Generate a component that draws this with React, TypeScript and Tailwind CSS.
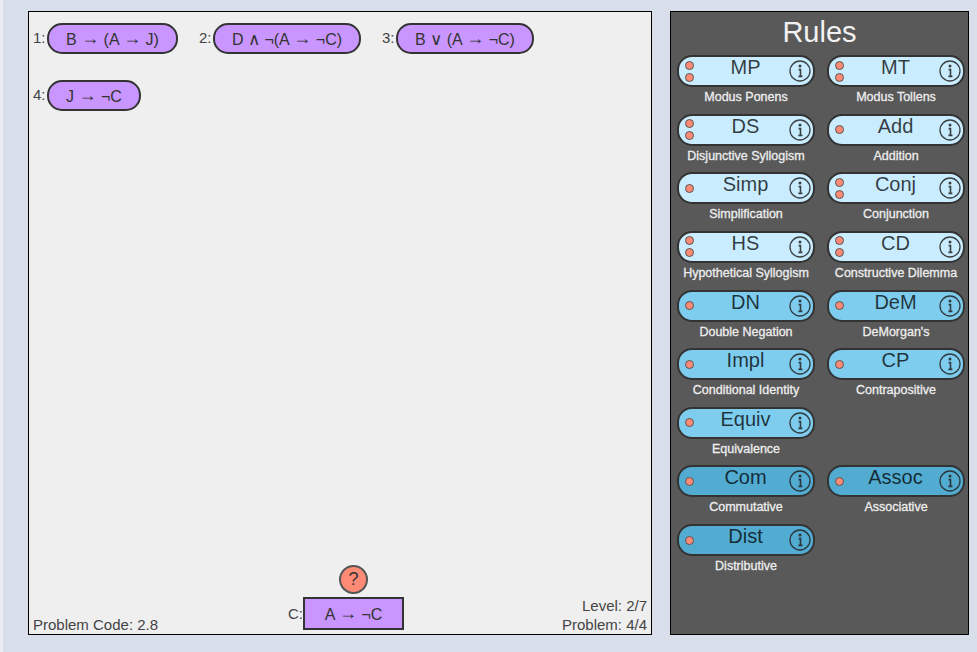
import { Fragment } from "react";

const sans = "font-['Liberation_Sans',Arial,sans-serif]";

type Rule = { short: string; name: string; inputs: number; color: string };

const rows: Rule[][] = [
  [
    { short: "MP", name: "Modus Ponens", inputs: 2, color: "bg-[#c9edff]" },
    { short: "MT", name: "Modus Tollens", inputs: 2, color: "bg-[#c9edff]" },
  ],
  [
    { short: "DS", name: "Disjunctive Syllogism", inputs: 2, color: "bg-[#c9edff]" },
    { short: "Add", name: "Addition", inputs: 1, color: "bg-[#c9edff]" },
  ],
  [
    { short: "Simp", name: "Simplification", inputs: 1, color: "bg-[#c9edff]" },
    { short: "Conj", name: "Conjunction", inputs: 2, color: "bg-[#c9edff]" },
  ],
  [
    { short: "HS", name: "Hypothetical Syllogism", inputs: 2, color: "bg-[#c9edff]" },
    { short: "CD", name: "Constructive Dilemma", inputs: 2, color: "bg-[#c9edff]" },
  ],
  [
    { short: "DN", name: "Double Negation", inputs: 1, color: "bg-[#7fcdee]" },
    { short: "DeM", name: "DeMorgan's", inputs: 1, color: "bg-[#7fcdee]" },
  ],
  [
    { short: "Impl", name: "Conditional Identity", inputs: 1, color: "bg-[#7fcdee]" },
    { short: "CP", name: "Contrapositive", inputs: 1, color: "bg-[#7fcdee]" },
  ],
  [{ short: "Equiv", name: "Equivalence", inputs: 1, color: "bg-[#7fcdee]" }],
  [
    { short: "Com", name: "Commutative", inputs: 1, color: "bg-[#52abd0]" },
    { short: "Assoc", name: "Associative", inputs: 1, color: "bg-[#52abd0]" },
  ],
  [{ short: "Dist", name: "Distributive", inputs: 1, color: "bg-[#52abd0]" }],
];

function InfoIcon() {
  return (
    <svg width="22" height="22" viewBox="0 0 22 22" className="shrink-0">
      <circle cx="11" cy="11" r="10" fill="none" stroke="#222" strokeOpacity="0.85" strokeWidth="1.3" />
      <circle cx="11" cy="6" r="1.5" fill="#222" fillOpacity="0.85" />
      <path d="M9.6 9.6h1.9v6.8M9.4 16.4h4" fill="none" stroke="#222" strokeOpacity="0.85" strokeWidth="1.6" />
    </svg>
  );
}

// arrows and wedges are wider in the reference than in Liberation Sans at the same size
function Formula({ text }: { text: string }) {
  return (
    <>
      {text.split(/([→∧∨])/).map((part, i) => {
        if (part === "→") {
          return (
            <span key={i} className="relative -top-[1px] text-[18px] leading-none">
              {part}
            </span>
          );
        }
        if (part === "∧" || part === "∨") {
          return (
            <span key={i} className="font-['DejaVu_Sans',sans-serif] text-[17px] font-light leading-none">
              {part}
            </span>
          );
        }
        return <Fragment key={i}>{part}</Fragment>;
      })}
    </>
  );
}

function RuleCard({ rule }: { rule: Rule }) {
  return (
    <div className="flex w-[138px] flex-col items-center">
      <div className={`flex h-[32px] w-full rounded-[15px] border-2 border-[#333] ${rule.color}`}>
        <div className="flex w-[20px] shrink-0 flex-col items-center justify-center gap-[3px]">
          {Array.from({ length: rule.inputs }).map((_, i) => (
            <span key={i} className="h-[9px] w-[9px] rounded-full border border-[#555] bg-[#ff8a75]" />
          ))}
        </div>
        <div className="flex-1 pl-[3px] text-center text-[20px] leading-[21px] text-black/75">{rule.short}</div>
        <div className="flex items-center pr-[2px]">
          <InfoIcon />
        </div>
      </div>
      <div className="mt-[2px] whitespace-nowrap text-[12.5px] leading-[16px] text-[#eee] [-webkit-text-stroke:0.3px_#eee]">
        {rule.name}
      </div>
    </div>
  );
}

function Premise({ n, text, width }: { n: number; text: string; width: string }) {
  return (
    <div className="flex items-center text-[15px] text-[#444]">
      <span className="w-[14px]">{n}:</span>
      <div className={`flex h-[31px] items-center justify-center rounded-[15px] border-2 border-[#333] bg-[#c996ff] text-[16px] leading-none text-[#333] ${width}`}>
        <span>
          <Formula text={text} />
        </span>
      </div>
    </div>
  );
}

export default function App() {
  return (
    <div className={`h-[652px] w-[977px] overflow-hidden border-l-[3px] border-[#ebedf3] bg-[#d8deea] pl-[25px] pt-[11px] ${sans}`}>
      <div className="flex gap-[18px]">
        <div className="flex h-[624px] w-[624px] flex-col justify-between border border-black bg-[#efefef]">
          <div className="flex flex-col gap-[26px] pl-[4px] pt-[11px]">
            <div className="flex gap-[21px]">
              <Premise n={1} text="B → (A → J)" width="w-[131px]" />
              <Premise n={2} text="D ∧ ¬(A → ¬C)" width="w-[148px]" />
              <Premise n={3} text="B ∨ (A → ¬C)" width="w-[138px]" />
            </div>
            <Premise n={4} text="J → ¬C" width="w-[94px]" />
          </div>
          <div className="grid grid-cols-[1fr_auto_1fr] items-end px-[4px] pb-[1px] text-[15px] leading-[17px] text-[#444]">
            <div>Problem Code: 2.8</div>
            <div className="ml-[12px] flex flex-col items-center">
              <div className="mb-[3px] ml-[15px] flex h-[29px] w-[29px] items-center justify-center rounded-full border-2 border-[#555] bg-[#ff8a75] text-[18px] text-[#333]">
                ?
              </div>
              <div className="mb-[3px] flex items-center">
                <span className="w-[15px]">C:</span>
                <div className="flex h-[33px] w-[101px] items-center justify-center border-2 border-[#333] bg-[#c996ff] text-[16px] text-[#333]">
                  <span>
                    <Formula text="A → ¬C" />
                  </span>
                </div>
              </div>
            </div>
            <div className="text-right">
              <div className="mb-[2px]">Level: 2/7</div>
              <div>Problem: 4/4</div>
            </div>
          </div>
        </div>
        <div className="flex h-[624px] w-[299px] flex-col items-start border border-black bg-[#595959] pl-[6px]">
          <div className="w-full pr-[6px] pt-[2px] text-center text-[29px] leading-[36px] text-[#f2f2f2]">Rules</div>
          <div className="mt-[5px] flex flex-col gap-[8.65px]">
            {rows.map((row) => (
              <div key={row[0].short} className="flex gap-[12px]">
                {row.map((r) => (
                  <RuleCard key={r.short} rule={r} />
                ))}
              </div>
            ))}
          </div>
        </div>
      </div>
    </div>
  );
}
